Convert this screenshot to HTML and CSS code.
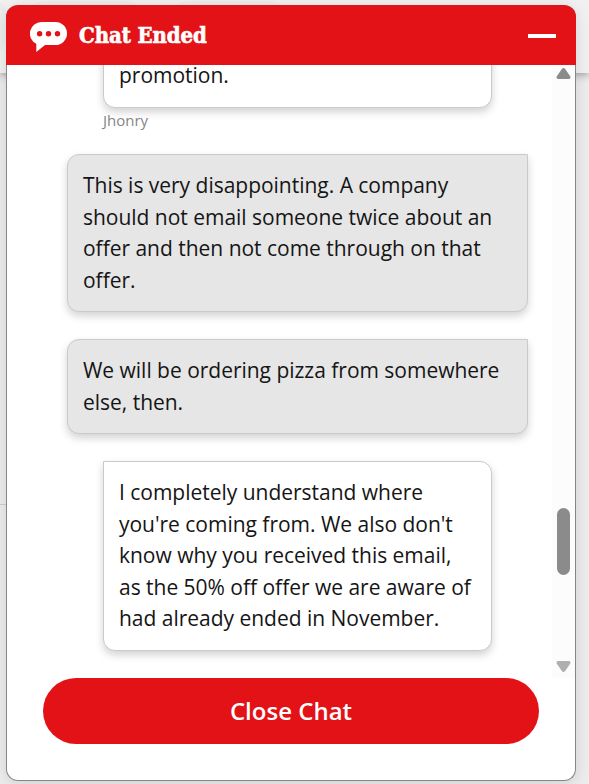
FILE: index.html
```html
<!doctype html>
<html lang="en">
<head>
	<meta charset="utf-8">
	<title>Chat Ended</title>
	<meta name="viewport" content="width=device-width, initial-scale=1">
	<link rel="stylesheet" href="styles.css">
</head>
<body>

	<!-- Page behind the chat window -->
	<div class="page">
		<div class="page-nav">
			<div class="pill"></div>
			<div class="pill"></div>
			<div class="pill"></div>
		</div>
		<div class="page-content"></div>
	</div>

	<section class="chat">
		<header class="chat-header">
			<svg class="chat-icon" width="38" height="31" viewBox="0 0 38 31">
				<path fill="#fff" d="M11.500 0h14a11.500 11.500 0 0 1 0 23H15L6.300 30V21.800A11.500 11.500 0 0 1 11.500 0z"/>
				<g fill="#e31217">
					<circle cx="9.600" cy="11.700" r="2.700"/>
					<circle cx="18.500" cy="11.700" r="2.700"/>
					<circle cx="27.500" cy="11.700" r="2.700"/>
				</g>
			</svg>
			<h1>Chat Ended</h1>
			<button class="minimize" aria-label="Minimize"></button>
		</header>

		<div class="chat-body">
			<div class="messages">
				<div class="message agent">promotion.</div>
				<div class="name">Jhonry</div>
				<div class="message customer">This is very disappointing. A company<br>should not email someone twice about an<br>offer and then not come through on that<br>offer.</div>
				<div class="message customer">We will be ordering pizza from somewhere<br>else, then.</div>
				<div class="message agent">I completely understand where<br>you're coming from. We also don't<br>know why you received this email,<br>as the 50% off offer we are aware of<br>had already ended in November.</div>
			</div>
			<div class="scrollbar">
				<svg width="15" height="11" viewBox="0 0 15 11">
					<path fill="#8b8b8b" d="M6 .8Q7.500-.6 9 .8L14.200 8.300Q15 10.600 13 11H2Q0 10.600.8 8.300z"/>
				</svg>
				<div class="thumb"></div>
				<svg class="down" width="15" height="11" viewBox="0 0 15 11">
					<path fill="#afafaf" d="M6 10.200Q7.500 11.600 9 10.200L14.200 2.700Q15 .4 13 0H2Q0 .4.8 2.700z"/>
				</svg>
			</div>
		</div>

		<footer class="chat-footer">
			<button class="close">Close Chat</button>
		</footer>
	</section>

</body>
</html>
```

FILE: styles.css
```css
* {
	box-sizing: border-box;
}
body {
	margin: 0;
	height: 784px;
	padding: 5px 13px 3px 6px;
	overflow: hidden;
	font-family: "Open Sans", "Noto Sans", Arial, sans-serif;
	font-size: 21px;
	line-height: 31.5px;
	color: #151515;
	background-color: #ededed;
}

/* Page behind the chat window */
.page {
	position: absolute;
	inset: 0;
	z-index: -1;
}
.page-nav {
	display: flex;
	gap: 14px;
	height: 73px;
	background-color: #f1f1f1;
	box-shadow: 0 1px 9px rgba(0, 0, 0, 0.4);
}
.pill {
	width: 130px;
	height: 50px;
	margin-top: 1px;
	border-radius: 25px;
	background-color: #ececec;
}
.pill:first-child {
	width: 20px;
	margin-left: -14px;
}
.page-content {
	width: 300px;
	height: 432px;
	border-bottom: 1px solid #cfcfcf;
}

.chat {
	display: flex;
	flex-direction: column;
	width: 570px;
	height: 776px;
	border: 1px solid #858585;
	border-top: 0;
	border-radius: 12px;
	background-color: #fff;
	box-shadow: 0 3px 16px rgba(0, 0, 0, 0.12);
}
.chat-header {
	display: flex;
	align-items: center;
	height: 60px;
	margin: 0 -1px;
	padding: 0 20px 0 24px;
	border-radius: 12px 12px 0 0;
	background-color: #e31217;
	color: #fff;
}
.chat-icon {
	margin-top: 4px;
}
h1 {
	flex: 1;
	margin: 2px 0 0 11px;
	font-family: "DejaVu Serif Condensed", "DejaVu Serif", serif;
	font-stretch: condensed;
	font-size: 22px;
	font-weight: bold;
	letter-spacing: -0.1px;
	white-space: nowrap;
	-webkit-text-stroke: 0.6px #fff;
}
.minimize {
	width: 28px;
	height: 4px;
	margin-top: 2px;
	padding: 0;
	border: 0;
	background-color: #fff;
}

.chat-body {
	display: flex;
	height: 613px;
}
.messages {
	flex: 1;
	display: flex;
	flex-direction: column;
	justify-content: flex-end;
	padding: 0 24px 27.5px 60px;
	overflow: hidden;
}
.message {
	flex: none;
	padding: 15px;
	border: 1px solid #cacaca;
	border-radius: 12px;
	box-shadow: 0 4px 8px rgba(0, 0, 0, 0.18);
	letter-spacing: -0.02px;
	white-space: nowrap;
}
.message + .message {
	margin-top: 27px;
}
.agent {
	margin: 0 36px;
	border-top-left-radius: 0;
	background-color: #fff;
}
.customer {
	border-top-right-radius: 0;
	background-color: #e6e6e6;
}
.name {
	flex: none;
	height: 46.5px;
	padding-left: 36px;
	font-size: 15px;
	line-height: 25px;
	color: #858585;
}

.scrollbar {
	display: flex;
	flex-direction: column;
	align-items: center;
	width: 23px;
	padding: 3px 0 6px;
	background-color: #fcfcfc;
}
.thumb {
	width: 13px;
	height: 67px;
	margin-top: 429px;
	border-radius: 7px;
	background-color: #8b8b8b;
}
.down {
	margin-top: auto;
}

.chat-footer {
	padding: 0 36px;
}
.close {
	display: block;
	width: 496px;
	height: 66px;
	padding: 0 0 2px;
	border: 0;
	border-radius: 33px;
	background-color: #e31217;
	color: #fff;
	font-family: inherit;
	font-size: 24px;
	font-weight: 600;
	cursor: pointer;
}
```
